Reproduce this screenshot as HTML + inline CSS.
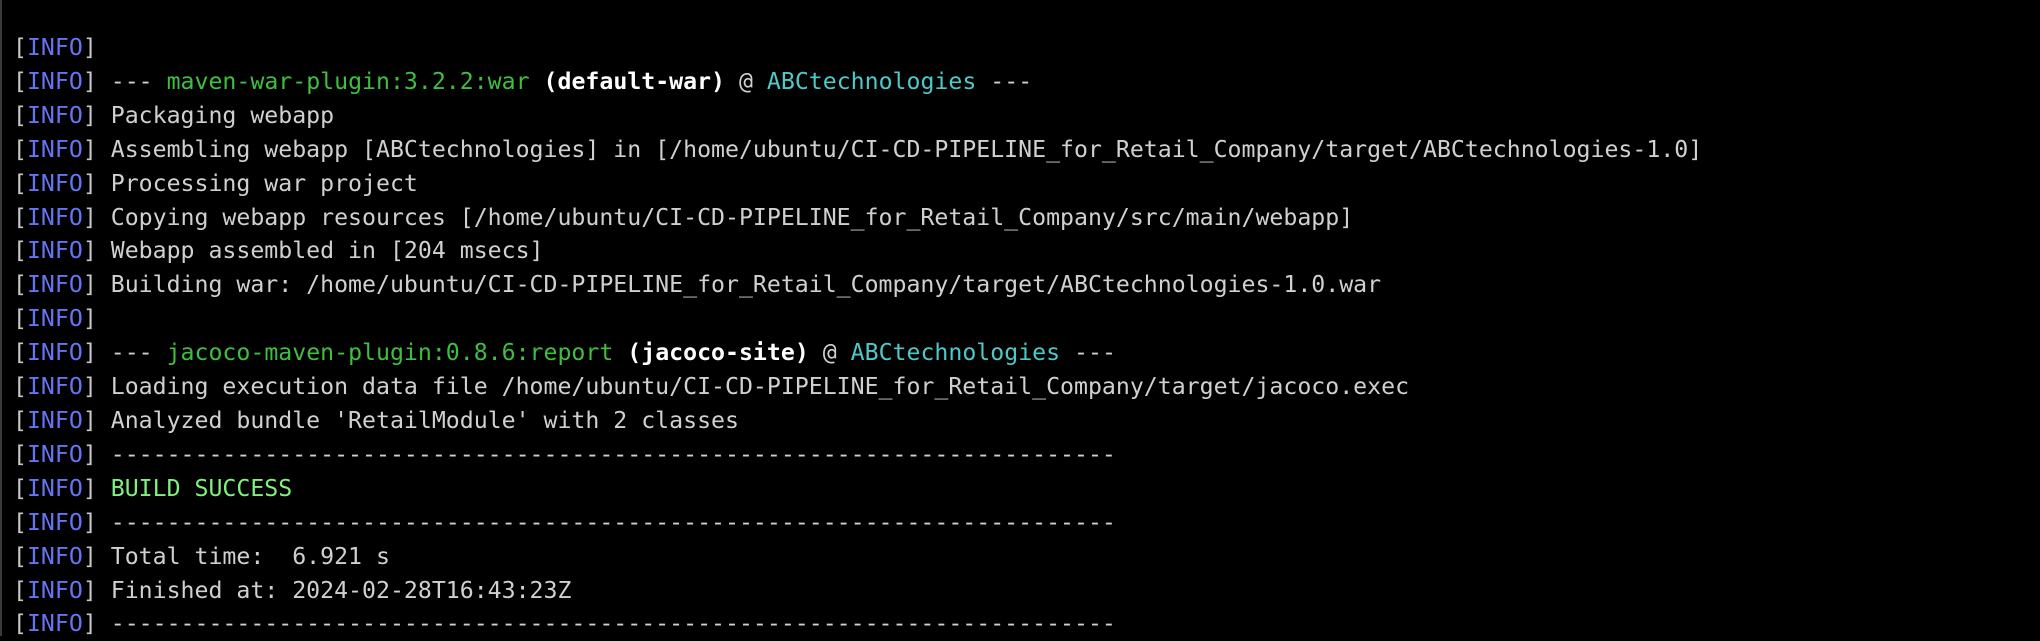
<!DOCTYPE html>
<html><head><meta charset="utf-8"><style>
html,body{margin:0;padding:0;background:#000;width:2040px;height:636px;overflow:hidden}
body{border-left:2px solid #3a3a3a;box-sizing:border-box}
pre{margin:0;position:absolute;left:13px;top:31px;font-family:"DejaVu Sans Mono","Liberation Mono",monospace;font-size:23.2px;line-height:33.9px;color:#d0d0d0;white-space:pre}
.i{color:#6474f2}.b{color:#c8c8c8}.g{color:#3fbf3f}.c{color:#4fc8c8}.w{color:#fff;font-weight:bold}.s{color:#80f080}
</style></head><body><pre><span class="b">[</span><span class="i">INFO</span><span class="b">]</span>
<span class="b">[</span><span class="i">INFO</span><span class="b">]</span> --- <span class="g">maven-war-plugin:3.2.2:war</span> <span class="w">(default-war)</span> @ <span class="c">ABCtechnologies</span> ---
<span class="b">[</span><span class="i">INFO</span><span class="b">]</span> Packaging webapp
<span class="b">[</span><span class="i">INFO</span><span class="b">]</span> Assembling webapp [ABCtechnologies] in [/home/ubuntu/CI-CD-PIPELINE_for_Retail_Company/target/ABCtechnologies-1.0]
<span class="b">[</span><span class="i">INFO</span><span class="b">]</span> Processing war project
<span class="b">[</span><span class="i">INFO</span><span class="b">]</span> Copying webapp resources [/home/ubuntu/CI-CD-PIPELINE_for_Retail_Company/src/main/webapp]
<span class="b">[</span><span class="i">INFO</span><span class="b">]</span> Webapp assembled in [204 msecs]
<span class="b">[</span><span class="i">INFO</span><span class="b">]</span> Building war: /home/ubuntu/CI-CD-PIPELINE_for_Retail_Company/target/ABCtechnologies-1.0.war
<span class="b">[</span><span class="i">INFO</span><span class="b">]</span>
<span class="b">[</span><span class="i">INFO</span><span class="b">]</span> --- <span class="g">jacoco-maven-plugin:0.8.6:report</span> <span class="w">(jacoco-site)</span> @ <span class="c">ABCtechnologies</span> ---
<span class="b">[</span><span class="i">INFO</span><span class="b">]</span> Loading execution data file /home/ubuntu/CI-CD-PIPELINE_for_Retail_Company/target/jacoco.exec
<span class="b">[</span><span class="i">INFO</span><span class="b">]</span> Analyzed bundle 'RetailModule' with 2 classes
<span class="b">[</span><span class="i">INFO</span><span class="b">]</span> ------------------------------------------------------------------------
<span class="b">[</span><span class="i">INFO</span><span class="b">]</span> <span class="s">BUILD SUCCESS</span>
<span class="b">[</span><span class="i">INFO</span><span class="b">]</span> ------------------------------------------------------------------------
<span class="b">[</span><span class="i">INFO</span><span class="b">]</span> Total time:  6.921 s
<span class="b">[</span><span class="i">INFO</span><span class="b">]</span> Finished at: 2024-02-28T16:43:23Z
<span class="b">[</span><span class="i">INFO</span><span class="b">]</span> ------------------------------------------------------------------------</pre></body></html>
